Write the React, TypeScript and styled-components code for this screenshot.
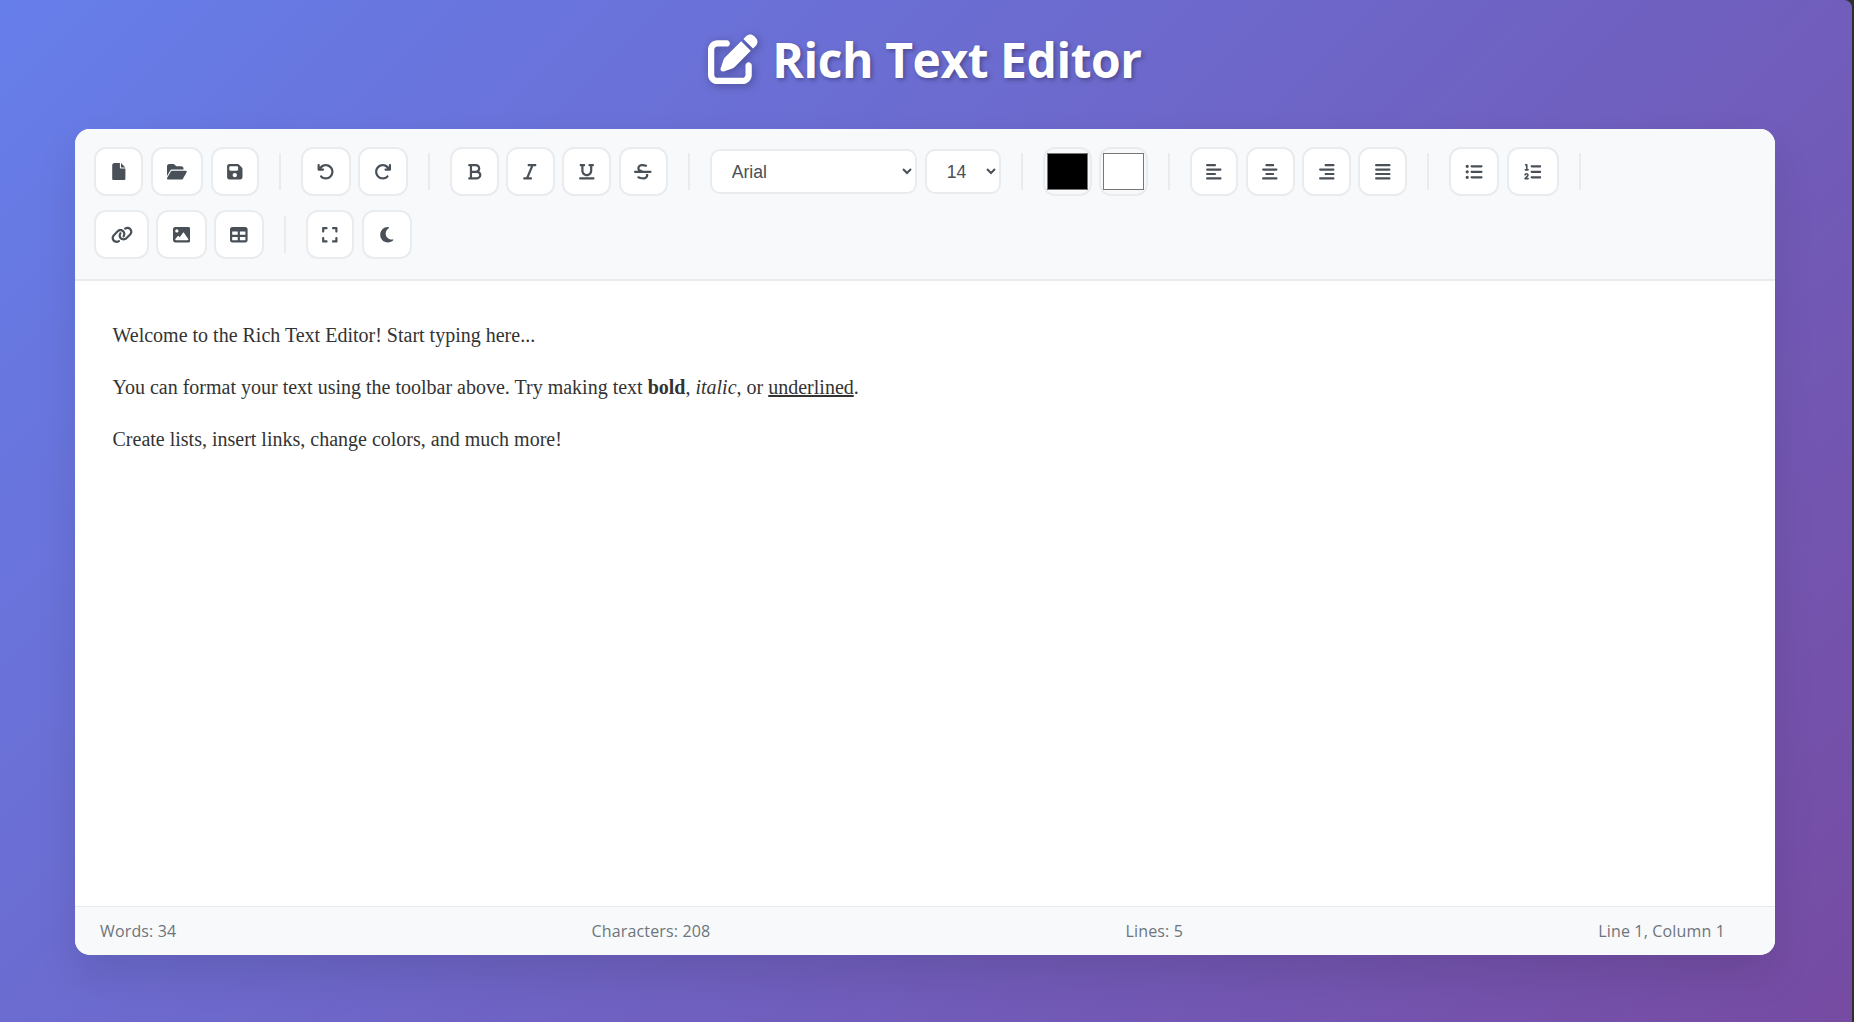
import React from 'react'
import styled, { createGlobalStyle } from 'styled-components'
import {
  FaAlignCenter,
  FaAlignJustify,
  FaAlignLeft,
  FaAlignRight,
  FaArrowRotateLeft,
  FaArrowRotateRight,
  FaBold,
  FaExpand,
  FaFile,
  FaFloppyDisk,
  FaFolderOpen,
  FaImage,
  FaItalic,
  FaLink,
  FaListOl,
  FaListUl,
  FaMoon,
  FaPenToSquare,
  FaStrikethrough,
  FaTable,
  FaUnderline,
} from 'react-icons/fa6'

const GlobalStyle = createGlobalStyle`
  html, body {
    margin: 0;
    padding: 0;
    height: 100%;
    background: #2f2f2f;
    overflow: hidden;
  }
  * {
    box-sizing: border-box;
  }
`

const Page = styled.div`
  width: 1852px;
  height: 1022px;
  padding: 0 77px 67px 75px;
  display: flex;
  flex-direction: column;
  border-top-right-radius: 8px;
  background: linear-gradient(135deg, #667eea 0%, #764ba2 100%);
  font-family: 'Open Sans', 'Noto Sans', sans-serif;
`

const Title = styled.h1`
  margin: 0;
  height: 129px;
  padding-bottom: 11px;
  display: flex;
  align-items: center;
  justify-content: center;
  gap: 14px;
  color: #fff;
  font-size: 48px;
  font-weight: 700;
  letter-spacing: -0.45px;
  text-shadow: 2px 2px 4px rgba(0, 0, 0, 0.3);
  svg {
    font-size: 50px;
    filter: drop-shadow(2px 2px 4px rgba(0, 0, 0, 0.3));
  }
`

const Card = styled.div`
  flex: 1;
  display: flex;
  flex-direction: column;
  border-radius: 15px;
  overflow: hidden;
  background: #fff;
  box-shadow: 0 20px 40px rgba(0, 0, 0, 0.1);
`

const Toolbar = styled.div`
  display: flex;
  flex-wrap: wrap;
  align-items: center;
  column-gap: 20px;
  row-gap: 14px;
  padding: 18px 20px 20px 19.2px;
  background: #f8f9fa;
  border-bottom: 2px solid #e9ecef;
`

const Group = styled.div<{ $gap?: number }>`
  display: flex;
  align-items: center;
  gap: ${(p) => p.$gap ?? 7.4}px;
`

const Separator = styled.div`
  width: 2px;
  height: 37px;
  background: #e9ecef;
`

const ToolButton = styled.button<{ $w: number }>`
  width: ${(p) => p.$w}px;
  height: 49px;
  padding: 0;
  display: flex;
  align-items: center;
  justify-content: center;
  background: #fff;
  border: 2px solid #e9ecef;
  border-radius: 12px;
  color: #495057;
  font-size: 17.6px;
`

// 1em square by default, these two glyphs are wider than tall
const LinkIcon = styled(FaLink)`
  width: 1.25em;
`
const FolderIcon = styled(FaFolderOpen)`
  width: 1.125em;
`

const Select = styled.select<{ $w: number }>`
  width: ${(p) => p.$w}px;
  height: 45px;
  padding: 0 4px 0 16px;
  background: #fff;
  border: 2px solid #e9ecef;
  border-radius: 10px;
  color: #495057;
  font-family: 'Liberation Sans', Arial, sans-serif;
  font-size: 17.6px;
`

const ColorInput = styled.input`
  width: 48.5px;
  height: 49px;
  padding: 0;
  background: #f8f9fa;
  border: 2px solid #e9ecef;
  border-radius: 12px;
  &::-webkit-color-swatch-wrapper {
    padding: 4px 2px;
  }
  &::-webkit-color-swatch {
    border: 1px solid #767676;
    border-radius: 0;
  }
`

const Editor = styled.div`
  flex: 1;
  padding: 40px 37.5px;
  background: #fff;
  color: #333;
  font-family: 'Liberation Serif', 'Times New Roman', serif;
  font-size: 20px;
  line-height: 28px;
  p {
    margin: 0 0 24px;
  }
`

const StatusBar = styled.div`
  height: 49px;
  padding: 0 50px 0 25px;
  display: flex;
  align-items: center;
  justify-content: space-between;
  background: #f8f9fa;
  border-top: 1px solid #e9ecef;
  color: #6c757d;
  font-size: 16px;
  letter-spacing: 0.15px;
`

type Tool = { icon: React.ReactNode; w: number; label: string }

const fileTools: Tool[] = [
  { icon: <FaFile />, w: 49, label: 'New' },
  { icon: <FolderIcon />, w: 52.8, label: 'Open' },
  { icon: <FaFloppyDisk />, w: 48.6, label: 'Save' },
]
const historyTools: Tool[] = [
  { icon: <FaArrowRotateLeft />, w: 49.4, label: 'Undo' },
  { icon: <FaArrowRotateRight />, w: 50, label: 'Redo' },
]
const formatTools: Tool[] = [
  { icon: <FaBold />, w: 48.5, label: 'Bold' },
  { icon: <FaItalic />, w: 48.5, label: 'Italic' },
  { icon: <FaUnderline />, w: 49.4, label: 'Underline' },
  { icon: <FaStrikethrough />, w: 49, label: 'Strikethrough' },
]
const alignTools: Tool[] = [
  { icon: <FaAlignLeft />, w: 48.8, label: 'Align left' },
  { icon: <FaAlignCenter />, w: 48.8, label: 'Align center' },
  { icon: <FaAlignRight />, w: 48.8, label: 'Align right' },
  { icon: <FaAlignJustify />, w: 48.8, label: 'Justify' },
]
const listTools: Tool[] = [
  { icon: <FaListUl />, w: 50.2, label: 'Bullet list' },
  { icon: <FaListOl />, w: 52, label: 'Numbered list' },
]
const insertTools: Tool[] = [
  { icon: <LinkIcon />, w: 54.8, label: 'Link' },
  { icon: <FaImage />, w: 50.2, label: 'Image' },
  { icon: <FaTable />, w: 50, label: 'Table' },
]
const viewTools: Tool[] = [
  { icon: <FaExpand />, w: 48.4, label: 'Fullscreen' },
  { icon: <FaMoon />, w: 50.2, label: 'Dark mode' },
]

function ToolGroup({ tools }: { tools: Tool[] }) {
  return (
    <Group>
      {tools.map((t) => (
        <ToolButton key={t.label} $w={t.w} title={t.label}>
          {t.icon}
        </ToolButton>
      ))}
    </Group>
  )
}

export default function App() {
  return (
    <>
      <GlobalStyle />
      <Page>
        <Title>
          <FaPenToSquare />
          Rich Text Editor
        </Title>
        <Card>
          <Toolbar>
            <ToolGroup tools={fileTools} />
            <Separator />
            <ToolGroup tools={historyTools} />
            <Separator />
            <ToolGroup tools={formatTools} />
            <Separator />
            <Group $gap={8}>
              <Select $w={207} defaultValue="Arial">
                <option>Arial</option>
                <option>Times New Roman</option>
                <option>Courier New</option>
              </Select>
              <Select $w={76.6} defaultValue="14">
                <option>12</option>
                <option>14</option>
                <option>16</option>
              </Select>
            </Group>
            <Separator />
            <Group>
              <ColorInput type="color" defaultValue="#000000" />
              <ColorInput type="color" defaultValue="#ffffff" />
            </Group>
            <Separator />
            <ToolGroup tools={alignTools} />
            <Separator />
            <ToolGroup tools={listTools} />
            <Separator />
            <ToolGroup tools={insertTools} />
            <Separator />
            <ToolGroup tools={viewTools} />
          </Toolbar>
          <Editor>
            <p>Welcome to the Rich Text Editor! Start typing here...</p>
            <p>
              You can format your text using the toolbar above. Try making text <b>bold</b>, <i>italic</i>, or{' '}
              <u>underlined</u>.
            </p>
            <p>Create lists, insert links, change colors, and much more!</p>
          </Editor>
          <StatusBar>
            <span>Words: 34</span>
            <span>Characters: 208</span>
            <span>Lines: 5</span>
            <span>Line 1, Column 1</span>
          </StatusBar>
        </Card>
      </Page>
    </>
  )
}
